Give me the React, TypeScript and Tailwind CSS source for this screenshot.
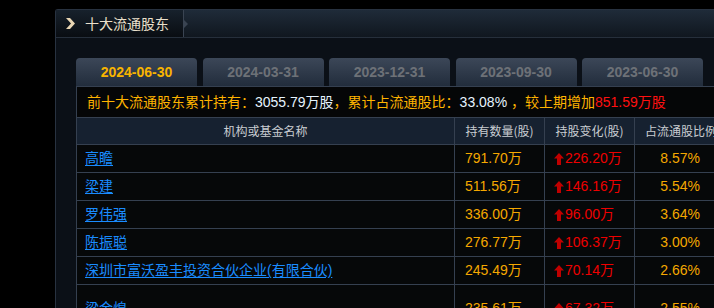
import React from "react";

const rows = [
  { name: "高瞻", hold: "791.70万", chg: "226.20万", pct: "8.57%" },
  { name: "梁建", hold: "511.56万", chg: "146.16万", pct: "5.54%" },
  { name: "罗伟强", hold: "336.00万", chg: "96.00万", pct: "3.64%" },
  { name: "陈振聪", hold: "276.77万", chg: "106.37万", pct: "3.00%" },
  { name: "深圳市富沃盈丰投资合伙企业(有限合伙)", hold: "245.49万", chg: "70.14万", pct: "2.66%" },
  { name: "梁金煌", hold: "235.61万", chg: "67.32万", pct: "2.55%", tall: true },
];

const tabs = ["2024-06-30", "2024-03-31", "2023-12-31", "2023-09-30", "2023-06-30"];

const cjk = { fontFamily: '"Noto Sans CJK SC", sans-serif' };
const mixed = { fontFamily: '"Liberation Sans", "Noto Sans CJK SC", sans-serif' };

function UpArrow() {
  return (
    <svg width="10" height="12" viewBox="0 0 10 12" className="shrink-0">
      <path d="M5 0 L10 5.5 L7 5.5 L7 12 L3 12 L3 5.5 L0 5.5 Z" fill="#c00000" />
    </svg>
  );
}

export default function App() {
  return (
    <div className="w-[714px] h-[308px] bg-black overflow-hidden pl-[55px] pt-[9px]">
      <div className="w-[700px] h-[320px] bg-[#0b1017] border-l border-t border-[#283240] rounded-tl-[3px] flex flex-col">
        {/* header bar */}
        <div className="h-[28px] shrink-0 flex bg-gradient-to-b from-[#1f2b39] to-[#10171f] border-b border-[#262f3b]">
          <div className="relative w-[128px] h-full flex items-center bg-gradient-to-b from-[#17212c] to-[#090d12] border-r border-[#3a4452]">
            <svg width="11" height="11" viewBox="0 0 11 11" className="ml-[9px]">
              <path d="M1 0 L5 0 L10 5.5 L5 11 L1 11 L6 5.5 Z" fill="#e9d6b4" />
            </svg>
            <span className="ml-[9px] text-[14px] text-[#ebe0cc]" style={cjk}>
              十大流通股东
            </span>
            <div className="absolute right-[-5px] top-[10px] w-0 h-0 border-y-[4px] border-y-transparent border-l-[4px] border-l-[#3a4452]" />
          </div>
        </div>

        {/* body */}
        <div className="pl-[20px] pt-[20px] flex flex-col">
          <div className="flex gap-[5.5px] h-[28px]">
            {tabs.map((t, i) => (
              <div
                key={t}
                className={`w-[121px] h-[28px] shrink-0 rounded-t-[4px] bg-gradient-to-b from-[#3c4758] to-[#222d3c] flex items-center justify-center text-[14px] font-bold ${
                  i === 0 ? "text-[#f8b400]" : "text-[#6d7177]"
                }`}
                style={{ fontFamily: '"Liberation Sans", sans-serif' }}
              >
                {t}
              </div>
            ))}
          </div>

          <div
            className="h-[31px] flex items-center pl-[10px] bg-[#050607] border-t border-l border-[#354050] text-[14px] text-[#ffb400] whitespace-nowrap"
            style={mixed}
          >
            前十大流通股东累计持有：<span className="text-[#e6f4ff]">3055.79万股</span>，累计占流通股比：
            <span className="text-[#e6f4ff]">33.08%</span>&nbsp;，较上期增加
            <span className="text-[#ff1010]">851.59万股</span>
          </div>

          {/* table */}
          <div className="border-t border-l border-[#354050] w-[700px]">
            <div className="h-[27px] flex bg-[#162130] text-[12px] text-[#c9cdd2] border-b border-[#354050]" style={cjk}>
              <div className="w-[378px] shrink-0 flex items-center justify-center border-r border-[#354050]">
                机构或基金名称
              </div>
              <div className="w-[90px] shrink-0 flex items-center justify-center border-r border-[#354050]">
                持有数量(股)
              </div>
              <div className="w-[90px] shrink-0 flex items-center justify-center border-r border-[#354050]">
                持股变化(股)
              </div>
              <div className="w-[90px] shrink-0 flex items-center pl-[10px] whitespace-nowrap border-r border-[#354050]">
                占流通股比例
              </div>
            </div>
            {rows.map((r) => (
              <div
                key={r.name}
                className={`${r.tall ? "h-[48px]" : "h-[28px]"} flex bg-[#060809] text-[14px] border-b border-[#354050]`}
                style={mixed}
              >
                <div className="w-[378px] shrink-0 flex items-center pl-[8px] border-r border-[#354050]">
                  <span className="text-[#1a8cff] underline underline-offset-[2px]">{r.name}</span>
                </div>
                <div className="w-[90px] shrink-0 flex items-center pl-[10px] border-r border-[#354050] text-[#f5a800]">
                  {r.hold}
                </div>
                <div className="w-[90px] shrink-0 flex items-center gap-[1px] pl-[9px] border-r border-[#354050] text-[#ee0000]">
                  <UpArrow />
                  <span>{r.chg}</span>
                </div>
                <div className="w-[90px] shrink-0 flex items-center justify-end pr-[24px] border-r border-[#354050] text-[#f5a800]">
                  {r.pct}
                </div>
              </div>
            ))}
          </div>
        </div>
      </div>
    </div>
  );
}
